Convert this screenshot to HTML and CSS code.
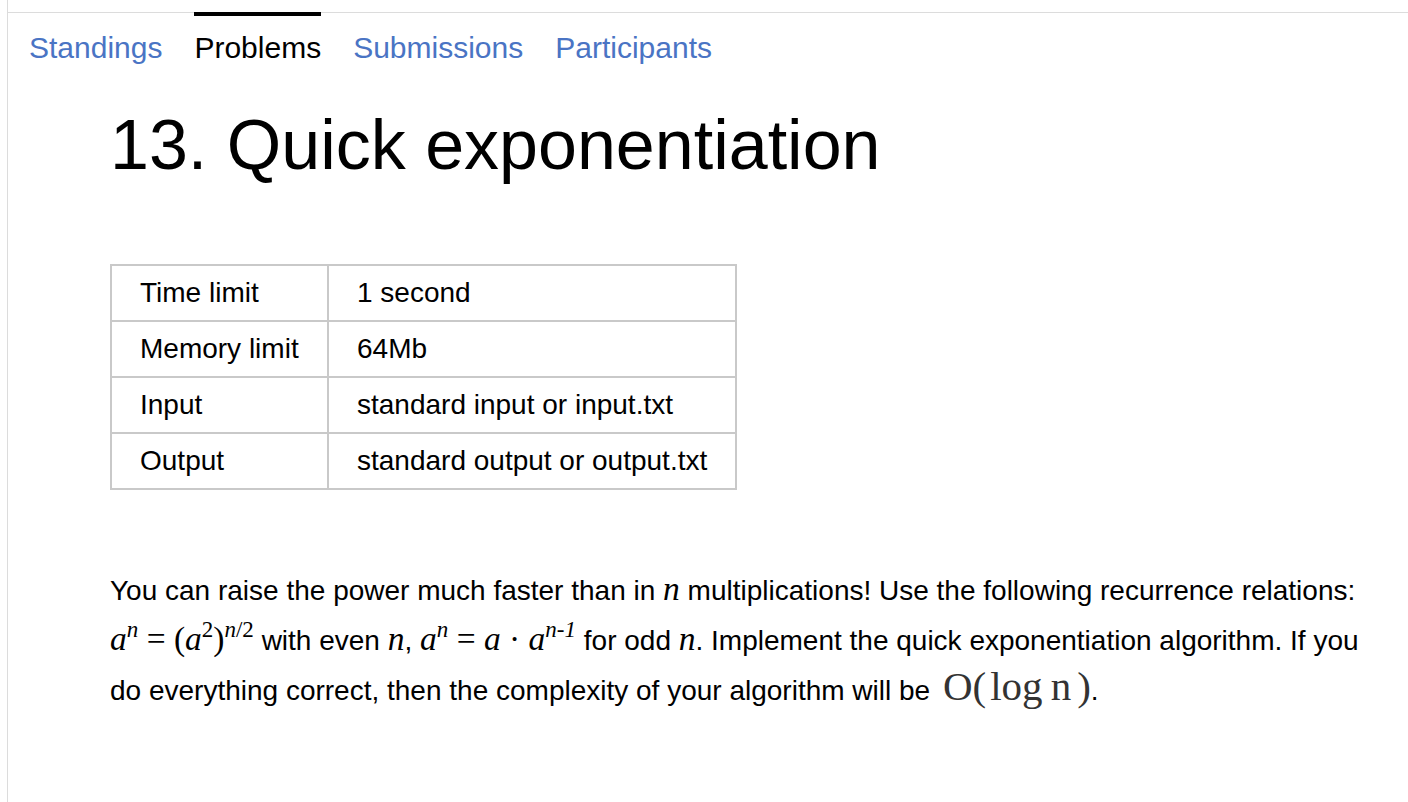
FILE: index.html
```html
<!DOCTYPE html>
<html lang="en">
<head>
<meta charset="utf-8">
<title>13. Quick exponentiation</title>
<link rel="stylesheet" href="styles.css">
</head>
<body>
<div class="frame">
  <nav class="tabs">
    <a class="tab" href="#">Standings</a>
    <a class="tab active" href="#">Problems</a>
    <a class="tab" href="#">Submissions</a>
    <a class="tab" href="#">Participants</a>
  </nav>
  <main class="content">
    <h1 class="title">13. Quick exponentiation</h1>
    <table class="limits">
      <colgroup><col class="c1"><col class="c2"></colgroup>
      <tr><td>Time limit</td><td>1 second</td></tr>
      <tr><td>Memory limit</td><td>64Mb</td></tr>
      <tr><td>Input</td><td>standard input or input.txt</td></tr>
      <tr><td>Output</td><td>standard output or output.txt</td></tr>
    </table>
    <p class="statement">You can raise the power much faster than in <i class="m">n</i> multiplications! Use the following recurrence relations: <span class="m"><i>a</i><sup><i>n</i></sup> = (<i>a</i><sup>2</sup>)<sup><i>n</i>/2</sup></span> with even <i class="m">n</i>, <span class="m"><i>a</i><sup><i>n</i></sup> = <i>a</i> · <i>a</i><sup><i>n</i>-<i>1</i></sup></span> for odd <i class="m">n</i>. Implement the quick exponentiation algorithm. If you do everything correct, then the complexity of your algorithm will be <span class="big">O(<span class="sp s1"></span>log<span class="sp"></span>n<span class="sp s2"></span>)</span>.</p>
  </main>
</div>
</body>
</html>
```

FILE: styles.css
```css
html, body {
  margin: 0;
  padding: 0;
  background: #ffffff;
}

body {
  font-family: "Liberation Sans", Arial, Helvetica, sans-serif;
  color: #000;
}

.frame {
  margin-left: 7px;
  border-left: 1px solid #dcdcdc;
  min-height: 802px;
  padding-top: 12px;
  box-sizing: border-box;
}

.tabs {
  display: flex;
  gap: 32px;
  border-top: 1px solid #dcdcdc;
  padding-left: 21px;
  height: 80px;
  box-sizing: border-box;
}

.tab {
  font-size: 30px;
  line-height: 34px;
  text-decoration: none;
  color: #4a74c4;
  padding-top: 18px;
}

.tab.active {
  color: #000;
  border-top: 4px solid #000;
  margin-top: -1px;
  padding-top: 15px;
}

.content {
  padding-left: 102px;
}

.title {
  margin: 13px 0 0 0;
  font-size: 70px;
  font-weight: normal;
  line-height: 80px;
}

.limits {
  margin-top: 79px;
  border-collapse: collapse;
  table-layout: fixed;
  width: 627px;
  font-size: 28px;
}

.limits col.c1 {
  width: 217px;
}

.limits td {
  border: 2px solid #c9c9c9;
  height: 56px;
  padding: 0 28px;
  line-height: 32px;
  white-space: nowrap;
  box-sizing: border-box;
}

.statement {
  margin: 76px 0 0;
  width: 1250px;
  font-size: 28px;
  line-height: 50px;
}

.m {
  font-family: "Liberation Serif", "Times New Roman", serif;
  font-size: 33.5px;
  line-height: 0;
}

.m i {
  font-style: italic;
}

.m sup {
  font-size: 23px;
  line-height: 0;
  vertical-align: 13px;
}

.big {
  font-family: "Liberation Serif", "Times New Roman", serif;
  font-size: 41px;
  line-height: 0;
  color: #333;
  margin-left: 5px;
}

.sp {
  display: inline-block;
  width: 8px;
}

.sp.s1 {
  width: 4px;
}

.sp.s2 {
  width: 6px;
}
```
